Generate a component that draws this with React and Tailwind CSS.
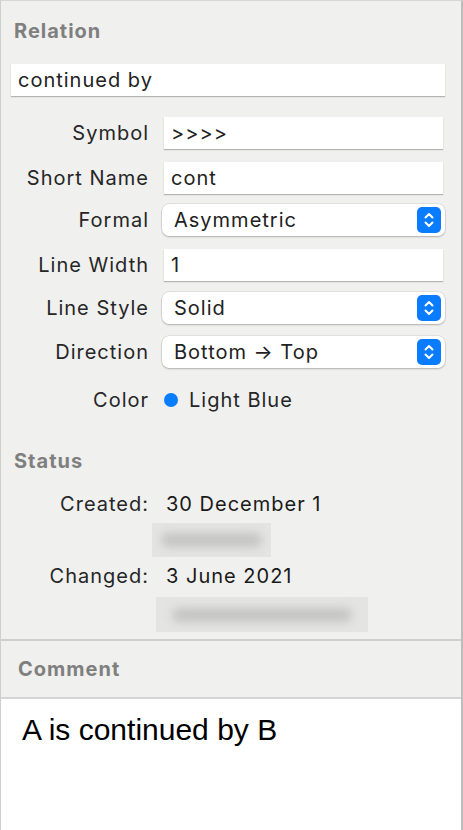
import React from 'react';

const FONT = { fontFamily: 'Inter, "Noto Sans", sans-serif' };

const Label = ({ children }) => (
  <div className="w-[148px] shrink-0 text-right text-[20px] leading-[24px] tracking-[0.05em] text-[#262626]">{children}</div>
);

const TextField = ({ value, className = '' }) => (
  <div
    className={`h-[32px] bg-white flex items-center px-[7px] text-[20px] tracking-[0.05em] text-[#222] shadow-[0_1px_1px_rgba(0,0,0,0.25)] ${className}`}
  >
    {value}
  </div>
);

const Stepper = () => (
  <div className="w-[24px] h-[26px] rounded-[5px] bg-[#0a7cff] flex items-center justify-center">
    <svg width="12" height="18" viewBox="0 0 12 18" fill="none" stroke="white" strokeWidth="2" strokeLinecap="round" strokeLinejoin="round">
      <path d="M2.5 6.5 L6 3 L9.5 6.5" />
      <path d="M2.5 11.5 L6 15 L9.5 11.5" />
    </svg>
  </div>
);

const Popup = ({ value }) => (
  <div className="ml-[13px] mr-[16px] flex-1 h-[32px] bg-white rounded-[7px] flex items-center justify-between pl-[12px] pr-[4px] text-[20px] tracking-[0.05em] text-[#222] shadow-[0_0_0_0.5px_rgba(0,0,0,0.12),0_1px_2px_rgba(0,0,0,0.22)]">
    <span>{value}</span>
    <Stepper />
  </div>
);

const FieldRow = ({ label, value }) => (
  <div className="flex items-center">
    <Label>{label}</Label>
    <TextField value={value} className="ml-[15px] mr-[18px] flex-1" />
  </div>
);

const PopupRow = ({ label, value }) => (
  <div className="flex items-center">
    <Label>{label}</Label>
    <Popup value={value} />
  </div>
);

const Blurred = ({ className }) => (
  <div className={`bg-[#e4e4e3] overflow-hidden flex items-center justify-center ${className}`}>
    <div className="w-[85%] h-[14px] rounded-full bg-[#c4c4c3] blur-[5px]" />
  </div>
);

const Heading = ({ children, className = '' }) => (
  <div className={`text-[20px] font-bold tracking-[0.05em] text-[#7f7f7f] leading-[24px] ${className}`}>{children}</div>
);

export default function App() {
  return (
    <div className="w-[463px] h-[830px] flex flex-col overflow-hidden bg-[#f0f0ef] border-t border-t-[#d6d6d6] border-l border-l-[#cfcfcf] border-r-2 border-r-[#bdbdbd]" style={FONT}>
      <div className="flex flex-col">
        <Heading className="pt-[18px] pl-[13px]">Relation</Heading>
        <TextField value="continued by" className="mt-[21px] ml-[10px] mr-[16px]" />

        <div className="mt-[21px] flex flex-col gap-[13px]">
          <FieldRow label="Symbol" value=">>>>" />
          <FieldRow label="Short Name" value="cont" />
        </div>
        <div className="mt-[10px]">
          <PopupRow label="Formal" value="Asymmetric" />
        </div>
        <div className="mt-[13px]">
          <FieldRow label="Line Width" value="1" />
        </div>
        <div className="mt-[11px] flex flex-col gap-[12px]">
          <PopupRow label="Line Style" value="Solid" />
          <PopupRow label="Direction" value="Bottom → Top" />
        </div>
        <div className="mt-[20px] flex items-center">
          <Label>Color</Label>
          <div className="ml-[15px] w-[14px] h-[14px] rounded-full bg-[#0a7cff]" />
          <span className="ml-[11px] text-[20px] leading-[24px] tracking-[0.05em] text-[#262626]">Light Blue</span>
        </div>

        <Heading className="mt-[37px] pl-[13px]">Status</Heading>
        <div className="mt-[19px] flex items-center">
          <Label>Created:</Label>
          <span className="ml-[17px] text-[20px] leading-[24px] tracking-[0.05em] text-[#1a1a1a]">30 December 1</span>
        </div>
        <Blurred className="mt-[7px] ml-[151px] w-[119px] h-[34px]" />
        <div className="mt-[7px] flex items-center">
          <Label>Changed:</Label>
          <span className="ml-[17px] text-[20px] leading-[24px] tracking-[0.05em] text-[#1a1a1a]">3 June 2021</span>
        </div>
        <Blurred className="mt-[9px] ml-[155px] w-[212px] h-[35px]" />
      </div>

      <div className="mt-[7px] border-t-2 border-t-[#cfcfcf] h-[60px] flex items-center pl-[17px] border-b-2 border-b-[#d4d4d4]">
        <Heading>Comment</Heading>
      </div>
      <div className="flex-1 bg-white pl-[21px] pt-[13px]">
        <div className="text-[30px] leading-[36px] text-black" style={{ fontFamily: '"Liberation Sans", Arial, sans-serif' }}>
          A is continued by B
        </div>
      </div>
    </div>
  );
}
